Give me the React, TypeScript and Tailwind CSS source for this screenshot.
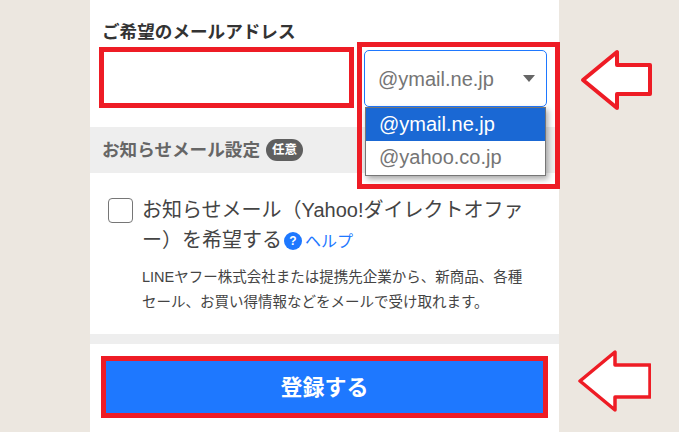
function LeftArrow({ className, points, width }: { className: string; points: string; width: string }) {
  return (
    <svg className={className} viewBox="0 0 76 66" fill="white" stroke="#ee1c25" strokeWidth={width} strokeLinejoin="round">
      <polygon points={points} />
    </svg>
  );
}

export default function App() {
  return (
    <div className="h-[432px] w-[679px] overflow-hidden bg-[#ece7e0] relative font-['Liberation_Sans','Noto_Sans_CJK_JP',sans-serif]">
      <div className="ml-[90px] w-[469px] h-[432px] bg-white flex flex-col">
        {/* mail address */}
        <div className="h-[127px] pl-[9px] pt-[20px]">
          <label className="block h-[27px] pl-[3px] text-[17.6px] leading-[24px] font-bold text-[#333]">ご希望のメールアドレス</label>
          <div className="flex items-start">
            <input className="w-[255px] h-[61px] border-[5px] border-[#ee1c25] bg-white outline-none" />
            <div className="relative ml-[10px] mt-[3px] w-[183px] h-[57px] rounded-[5px] border border-[#1e78ff] bg-white flex items-center justify-between pl-[13px] pr-[11px] text-[20px] text-[#757575]">
              <span>@ymail.ne.jp</span>
              <span className="w-0 h-0 border-x-[6px] border-t-[7px] border-x-transparent border-t-[#666]" />
              <div className="absolute left-0 top-[56px] w-[181px] h-[69px] border border-[#767676] bg-white shadow-[2px_3px_6px_rgba(0,0,0,0.35)] z-10">
                <div className="h-[33px] bg-[#1a68d4] text-white pl-[13px] leading-[33px]">@ymail.ne.jp</div>
                <div className="h-[34px] pl-[13px] leading-[33px] text-[#757575]">@yahoo.co.jp</div>
              </div>
              <div className="absolute left-[-8px] top-[-9px] w-[203px] h-[147px] border-[5px] border-[#ee1c25] z-20 pointer-events-none" />
            </div>
          </div>
        </div>

        {/* notice mail heading */}
        <div className="h-[46px] bg-[#eeeeee] pl-[12px] flex items-center gap-[6px]">
          <span className="text-[17.6px] font-bold text-[#666]">お知らせメール設定</span>
          <span className="h-[22px] px-[6px] rounded-full bg-[#5f5f5f] text-white text-[12.5px] font-bold leading-[22px]">任意</span>
        </div>

        {/* checkbox */}
        <div className="h-[161px] pl-[18px] pr-[20px] pt-[22px] flex items-start gap-[9px]">
          <span className="mt-[3px] w-[25px] h-[25px] shrink-0 rounded-[4px] border border-[#767676] bg-white" />
          <div>
            <p className="text-[20px] leading-[30px] text-[#444]">
              お知らせメール（Yahoo!ダイレクトオファ<br />ー）を希望する
              <span className="inline-flex align-[2px] ml-[2px] mr-[3px] w-[18px] h-[18px] rounded-full bg-[#1e78ff] text-white text-[12px] font-bold items-center justify-center">?</span>
              <span className="text-[#1e78ff] text-[16px]">ヘルプ</span>
            </p>
            <p className="mt-[8px] text-[14.5px] leading-[25px] text-[#444]">LINEヤフー株式会社または提携先企業から、新商品、各種<br />セール、お買い得情報などをメールで受け取れます。</p>
          </div>
        </div>

        <div className="h-[10px] bg-[#eeeeee]" />

        {/* submit */}
        <div className="pl-[11px] pt-[12px]">
          <button className="w-[447px] h-[62px] border-[5px] border-[#ee1c25] bg-[#1e78ff] text-white text-[22px] font-bold">登録する</button>
        </div>
      </div>

      <LeftArrow className="absolute left-[579px] top-[47px] w-[76px] h-[66px]" width="4" points="4,33 38,5 38,18 71,18 71,47 38,47 38,61" />
      <LeftArrow className="absolute left-[575px] top-[348px] w-[76px] h-[66px]" width="3.5" points="5,33 40,4 40,17 75,17 75,49 40,49 40,62" />
    </div>
  );
}
